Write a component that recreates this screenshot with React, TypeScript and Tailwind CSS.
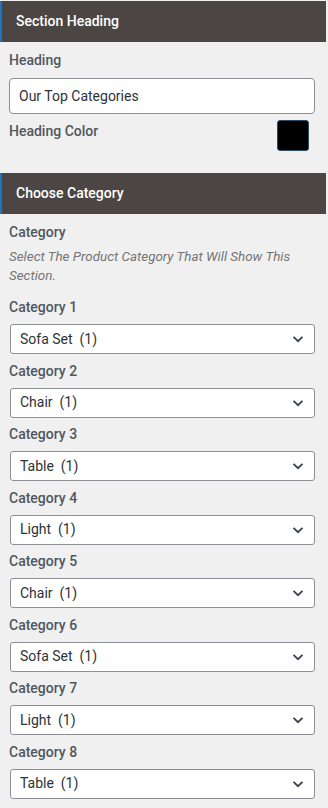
import React from 'react'

const categories = [
	'Sofa Set  (1)',
	'Chair  (1)',
	'Table  (1)',
	'Light  (1)',
	'Chair  (1)',
	'Sofa Set  (1)',
	'Light  (1)',
	'Table  (1)',
]

const SectionBar = ({ title }: { title: string }) => (
	<div className="h-[41px] flex items-center pl-[14px] bg-[#4b4644] border-l-2 border-[#1e73be] mr-[2px]">
		<span className="text-white text-[14px] font-medium">{title}</span>
	</div>
)

const Chevron = () => (
	<svg width="12" height="8" viewBox="0 0 12 8" fill="none">
		<path d="M1.5 1.8 6 6.2 10.5 1.8" stroke="#3c434a" strokeWidth="1.8" />
	</svg>
)

const App = () => {
	return (
		<div className="w-[328px] min-h-[808px] bg-[#f0f0f0] pt-px pb-[20px]" style={{ fontFamily: 'Roboto, "Liberation Sans", sans-serif' }}>
			<SectionBar title="Section Heading" />
			<div className="px-[9px] pr-[13px]">
				<div className="mt-[8px] text-[14px] leading-[20px] font-medium text-[#50575e]">Heading</div>
				<div className="mt-[8px] h-[36px] flex items-center px-[9px] bg-white border border-[#8c8f94] rounded-[4px] text-[14px] text-[#2c3338]">
					Our Top Categories
				</div>
				<div className="mt-[6px] flex items-start justify-between">
					<span className="mt-[1px] text-[14px] leading-[20px] font-medium text-[#50575e]">Heading Color</span>
					<span className="w-[32px] h-[31px] mr-[6px] rounded-[3px] bg-black border border-[#2b4d66]" />
				</div>
			</div>
			<div className="mt-[22px]">
				<SectionBar title="Choose Category" />
			</div>
			<div className="px-[9px] pr-[13px]">
				<div className="mt-[8px] text-[14px] leading-[20px] font-medium text-[#50575e]">Category</div>
				<p className="mt-[5px] text-[13.4px] leading-[19px] italic text-[#757575]">
					Select The Product Category That Will Show This Section.
				</p>
				<div className="mt-[5.5px] flex flex-col">
					{categories.map((c, i) => (
						<div key={i} className="mt-[6.5px] flex flex-col">
							<label className="text-[14px] leading-[20px] font-medium text-[#50575e]">Category {i + 1}</label>
							<div className="mt-[7px] ml-px h-[30px] flex items-center justify-between pl-[9px] pr-[10px] bg-white border border-[#8c8f94] rounded-[3px]">
								<span className="text-[14px] text-[#2c3338] whitespace-pre">{c}</span>
								<Chevron />
							</div>
						</div>
					))}
				</div>
			</div>
		</div>
	)
}

export default App
